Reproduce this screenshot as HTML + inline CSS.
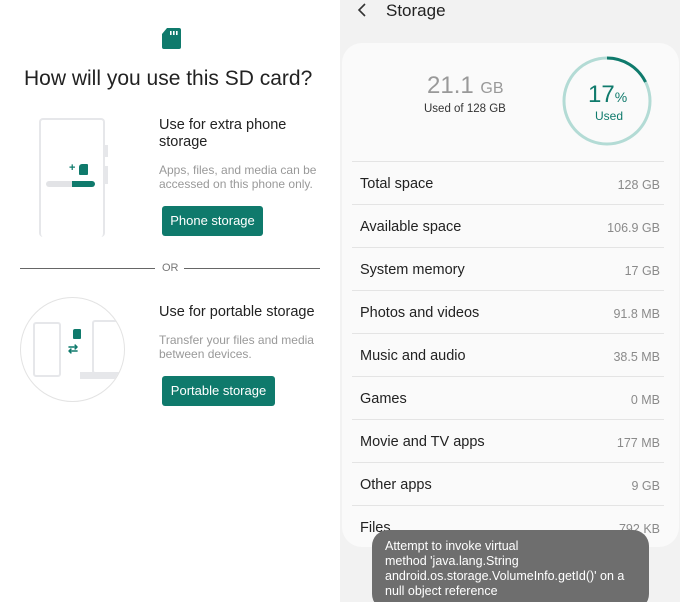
<!DOCTYPE html>
<html><head><style>
*{margin:0;padding:0;box-sizing:border-box}
html,body{width:680px;height:602px;overflow:hidden}
body{position:relative;font-family:"Liberation Sans",sans-serif;background:#fff}
.a{position:absolute;white-space:nowrap}
.btn{position:absolute;background:#0f7a6c;color:#fff;font-size:13px;border-radius:3px;text-align:center;line-height:30px}
.row{position:absolute;left:360px;width:300px;font-size:14.5px;color:#222}
.row span{position:absolute;right:0;top:2px;font-size:12.5px;color:#8a8a8a}
.div{position:absolute;left:352px;width:312px;height:1px;background:#e4e4e4}
</style></head><body>
<div class="a" style="left:0;top:0;width:340px;height:602px;background:#fff"></div>
<svg class="a" style="left:160px;top:26px" width="22" height="24" viewBox="0 0 22 24"><path d="M7 2H19a2 2 0 0 1 2 2V21a2 2 0 0 1-2 2H4a2 2 0 0 1-2-2V8z" fill="#0f7a6c"/><rect x="10" y="5" width="1.6" height="4" fill="#fff"/><rect x="13" y="5" width="1.6" height="4" fill="#fff"/><rect x="16" y="5" width="1.6" height="4" fill="#fff"/></svg>
<div class="a" style="left:24px;top:67px;font-size:21px;color:#222">How will you use this SD card?</div>
<div class="a" style="left:39px;top:118px;width:66px;height:119px;border:2px solid #e6e7ea;border-radius:4px;border-bottom:none"></div>
<div class="a" style="left:105px;top:145px;width:3px;height:12px;background:#e6e7ea"></div>
<div class="a" style="left:105px;top:166px;width:3px;height:18px;background:#e6e7ea"></div>
<div class="a" style="left:46px;top:181px;width:48px;height:6px;background:#e2e3e6;border-radius:3px"></div>
<div class="a" style="left:72px;top:181px;width:23px;height:6px;background:#0f7a6c;border-radius:0 3px 3px 0"></div>
<div class="a" style="left:69px;top:162px;font-size:11px;font-weight:bold;color:#0f7a6c">+</div>
<div class="a" style="left:79px;top:164px;width:9px;height:11px;background:#0f7a6c;border-radius:3px 1px 1px 1px"></div>
<div class="a" style="left:159px;top:117px;font-size:14.5px;color:#222;line-height:17px">Use for extra phone<br>storage</div>
<div class="a" style="left:159px;top:163px;font-size:12px;color:#999;line-height:14px">Apps, files, and media can be<br>accessed on this phone only.</div>
<div class="btn" style="left:162px;top:206px;width:101px;height:30px">Phone storage</div>
<div class="a" style="left:20px;top:268px;width:135px;height:1px;background:#666"></div>
<div class="a" style="left:162px;top:262px;font-size:11px;color:#777">OR</div>
<div class="a" style="left:184px;top:268px;width:136px;height:1px;background:#666"></div>
<div class="a" style="left:20px;top:297px;width:105px;height:105px;border:1.5px solid #e3e3e3;border-radius:50%;overflow:hidden">
<div class="a" style="left:12px;top:24px;width:28px;height:55px;border:2px solid #e6e7ea;border-radius:3px"></div>
<div class="a" style="left:71px;top:22px;width:40px;height:54px;border:2px solid #e6e7ea;border-radius:3px"></div>
<div class="a" style="left:59px;top:74px;width:50px;height:7px;background:#e6e7ea"></div>
<div class="a" style="left:52px;top:31px;width:8px;height:10px;background:#0f7a6c;border-radius:2px 1px 1px 1px"></div>
<div class="a" style="left:47px;top:44px;font-size:12px;font-weight:bold;color:#0f7a6c">⇄</div>
</div>
<div class="a" style="left:159px;top:304px;font-size:14.5px;color:#222">Use for portable storage</div>
<div class="a" style="left:159px;top:333px;font-size:12px;color:#999;line-height:14px">Transfer your files and media<br>between devices.</div>
<div class="btn" style="left:162px;top:376px;width:113px;height:30px">Portable storage</div>

<div class="a" style="left:340px;top:0;width:340px;height:602px;background:#f2f2f2"></div>
<svg class="a" style="left:356px;top:3px" width="12" height="14" viewBox="0 0 12 14"><path d="M9 1L3 7L9 13" fill="none" stroke="#333" stroke-width="1.6"/></svg>
<div class="a" style="left:386px;top:1px;font-size:17px;color:#222">Storage</div>
<div class="a" style="left:342px;top:43px;width:337px;height:504px;background:#fafafa;border-radius:20px"></div>
<div class="a" style="left:427px;top:72px;font-size:24px;color:#999">21.1 <span style="font-size:16px">GB</span></div>
<div class="a" style="left:424px;top:103px;font-size:11.5px;color:#333">Used of 128 GB</div>
<svg class="a" style="left:561px;top:55px" width="92" height="92" viewBox="0 0 92 92"><circle cx="46" cy="46" r="43" fill="none" stroke="#b3dbd5" stroke-width="3"/><path d="M46 3A43 43 0 0 1 84.5 27" fill="none" stroke="#0f7a6c" stroke-width="3"/></svg>
<div class="a" style="left:588px;top:81px;font-size:24px;color:#0f7a6c">17<span style="font-size:14px">%</span></div>
<div class="a" style="left:595px;top:109px;font-size:12px;color:#0f7a6c">Used</div>
<div class="div" style="top:161px"></div>
<div class="row" style="top:176px">Total space<span>128 GB</span></div>
<div class="div" style="top:204px"></div>
<div class="row" style="top:219px">Available space<span>106.9 GB</span></div>
<div class="div" style="top:247px"></div>
<div class="row" style="top:262px">System memory<span>17 GB</span></div>
<div class="div" style="top:290px"></div>
<div class="row" style="top:305px">Photos and videos<span>91.8 MB</span></div>
<div class="div" style="top:333px"></div>
<div class="row" style="top:348px">Music and audio<span>38.5 MB</span></div>
<div class="div" style="top:376px"></div>
<div class="row" style="top:391px">Games<span>0 MB</span></div>
<div class="div" style="top:419px"></div>
<div class="row" style="top:434px">Movie and TV apps<span>177 MB</span></div>
<div class="div" style="top:462px"></div>
<div class="row" style="top:477px">Other apps<span>9 GB</span></div>
<div class="div" style="top:505px"></div>
<div class="row" style="top:520px">Files<span>792 KB</span></div>
<div class="a" style="left:372px;top:530px;width:277px;height:80px;background:#6e6e6e;border-radius:16px;color:#fff;font-size:12.5px;line-height:15px;padding:9px 0 0 13px;white-space:normal">Attempt to invoke virtual<br>method 'java.lang.String<br>android.os.storage.VolumeInfo.getId()' on a<br>null object reference</div>
</body></html>
